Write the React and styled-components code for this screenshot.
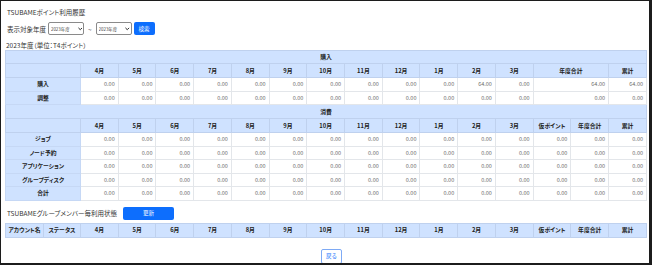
import styled, { createGlobalStyle } from "styled-components";

const GlobalStyle = createGlobalStyle`
  html, body {
    margin: 0;
    padding: 0;
    background: #fff;
  }
  body {
    font-family: "Noto Sans CJK JP", "Noto Sans", sans-serif;
    font-feature-settings: "palt";
    color: #333;
  }
`;

const Frame = styled.div`
  box-sizing: border-box;
  width: 652px;
  height: 265px;
  overflow: hidden;
  border-style: solid;
  border-color: #1c1c1c;
  border-width: 1px 3px 2px 1px;
  padding: 0 1px 0 4px;
`;

const Title = styled.div`
  padding: 6px 0 0 2px;
  font-size: 6.5px;
  line-height: 10px;
`;

const SearchRow = styled.div`
  display: flex;
  align-items: center;
  gap: 2px;
  margin-top: 5px;
  height: 13px;
  padding-left: 2px;
  font-size: 6.5px;
`;

const SelectBox = styled.div`
  position: relative;
  width: 36px;
  height: 13px;
`;

const Select = styled.select`
  appearance: none;
  box-sizing: border-box;
  width: 100%;
  height: 100%;
  font-family: inherit;
  font-size: 4.4px;
  padding: 0 6px 0 2px;
  border: 1px solid #8a8a8a;
  border-radius: 2px;
  background: #fff;
  color: #444;
`;

const Chevron = styled.svg`
  position: absolute;
  right: 2px;
  top: 4.5px;
  width: 4.5px;
  height: 4px;
  pointer-events: none;
`;

const Tilde = styled.span`
  color: #555;
  margin: 0 2px;
`;

const Button = styled.button`
  box-sizing: border-box;
  height: 13px;
  width: ${(p) => p.w || 21}px;
  padding: 0;
  border: none;
  border-radius: 2px;
  background: #0d6efd;
  color: #fff;
  font-family: inherit;
  font-size: 5.5px;
`;

const Unit = styled.div`
  margin-top: 5px;
  padding-left: 1px;
  font-size: 6.5px;
  line-height: 10px;
`;

const Table = styled.table`
  width: 642px;
  border-collapse: collapse;
  table-layout: fixed;
  font-size: 5.5px;
  line-height: 8px;
`;

const Head = styled.th`
  background: #cfe2ff;
  border: 1px solid #bfd1ee;
  color: #222;
  font-weight: bold;
  font-size: 5.8px;
  text-align: center;
  padding: 0;
  height: ${(p) => p.h || 12}px;
`;

const Label = styled.th`
  background: #cfe2ff;
  border: 1px solid #c6d8f5;
  color: #222;
  font-weight: bold;
  font-size: 5.8px;
  text-align: center;
  padding: 0;
  height: 12.5px;
`;

const Value = styled.td`
  background: #fff;
  border: 1px solid #e3e6ea;
  color: #6a6a6a;
  text-align: right;
  padding: 0 3px 0 0;
`;

const GroupRow = styled.div`
  display: flex;
  align-items: center;
  gap: 6px;
  margin-top: 6px;
  height: 13px;
  padding-left: 2px;
  font-size: 6.5px;
`;

const MemberTable = styled(Table)`
  margin-top: 3px;
`;

const Footer = styled.div`
  display: flex;
  justify-content: center;
  margin-top: 11px;
  padding-left: 10px;
`;

const BackButton = styled.button`
  box-sizing: border-box;
  width: 21px;
  height: 15px;
  padding: 0;
  background: #fff;
  border: 1px solid #7eaaf5;
  border-radius: 2px;
  color: #0d6efd;
  font-family: inherit;
  font-size: 5.5px;
`;

const months = ["4月", "5月", "6月", "7月", "8月", "9月", "10月", "11月", "12月", "1月", "2月", "3月"];

const purchase = [
  { name: "購入", vals: ["0.00", "0.00", "0.00", "0.00", "0.00", "0.00", "0.00", "0.00", "0.00", "0.00", "64.00", "0.00"], year: "64.00", total: "64.00" },
  { name: "調整", vals: Array(12).fill("0.00"), year: "0.00", total: "0.00" },
];

const usage = ["ジョブ", "ノード予約", "アプリケーション", "グループディスク", "合計"];

const YearSelect = () => (
  <SelectBox>
    <Select defaultValue="2023">
      <option value="2023">2023年度</option>
    </Select>
    <Chevron viewBox="0 0 10 8">
      <path d="M1 1.5 L5 5.5 L9 1.5" fill="none" stroke="#222" strokeWidth="2.2" />
    </Chevron>
  </SelectBox>
);

const App = () => {
  return (
    <Frame>
      <GlobalStyle />
      <Title>TSUBAMEポイント利用履歴</Title>
      <SearchRow>
        <span>表示対象年度</span>
        <YearSelect />
        <Tilde>~</Tilde>
        <YearSelect />
        <Button>検索</Button>
      </SearchRow>
      <Unit>2023年度（単位：T4ポイント）</Unit>
      <Table>
        <colgroup>
          <col style={{ width: 75 }} />
        </colgroup>
        <tbody>
          <tr>
            <Head colSpan={16} h={12}>購入</Head>
          </tr>
          <tr>
            <Head h={13} />
            {months.map((m) => (
              <Head key={m} h={13}>{m}</Head>
            ))}
            <Head colSpan={2} h={13}>年度合計</Head>
            <Head h={13}>累計</Head>
          </tr>
          {purchase.map((r) => (
            <tr key={r.name}>
              <Label>{r.name}</Label>
              {r.vals.map((v, i) => (
                <Value key={i}>{v}</Value>
              ))}
              <Value colSpan={2}>{r.year}</Value>
              <Value>{r.total}</Value>
            </tr>
          ))}
          <tr>
            <Head colSpan={16} h={13}>消費</Head>
          </tr>
          <tr>
            <Head h={13} />
            {months.map((m) => (
              <Head key={m} h={13}>{m}</Head>
            ))}
            <Head h={13}>仮ポイント</Head>
            <Head h={13}>年度合計</Head>
            <Head h={13}>累計</Head>
          </tr>
          {usage.map((name) => (
            <tr key={name}>
              <Label>{name}</Label>
              {Array.from({ length: 15 }).map((_, i) => (
                <Value key={i}>0.00</Value>
              ))}
            </tr>
          ))}
        </tbody>
      </Table>
      <GroupRow>
        <span>TSUBAMEグループメンバー毎利用状態</span>
        <Button w={51}>更新</Button>
      </GroupRow>
      <MemberTable>
        <colgroup>
          <col style={{ width: 38 }} />
          <col style={{ width: 37 }} />
        </colgroup>
        <thead>
          <tr>
            <Head h={13}>アカウント名</Head>
            <Head h={13}>ステータス</Head>
            {months.map((m) => (
              <Head key={m} h={13}>{m}</Head>
            ))}
            <Head h={13}>仮ポイント</Head>
            <Head h={13}>年度合計</Head>
            <Head h={13}>累計</Head>
          </tr>
        </thead>
      </MemberTable>
      <Footer>
        <BackButton>戻る</BackButton>
      </Footer>
    </Frame>
  );
};

export default App;
